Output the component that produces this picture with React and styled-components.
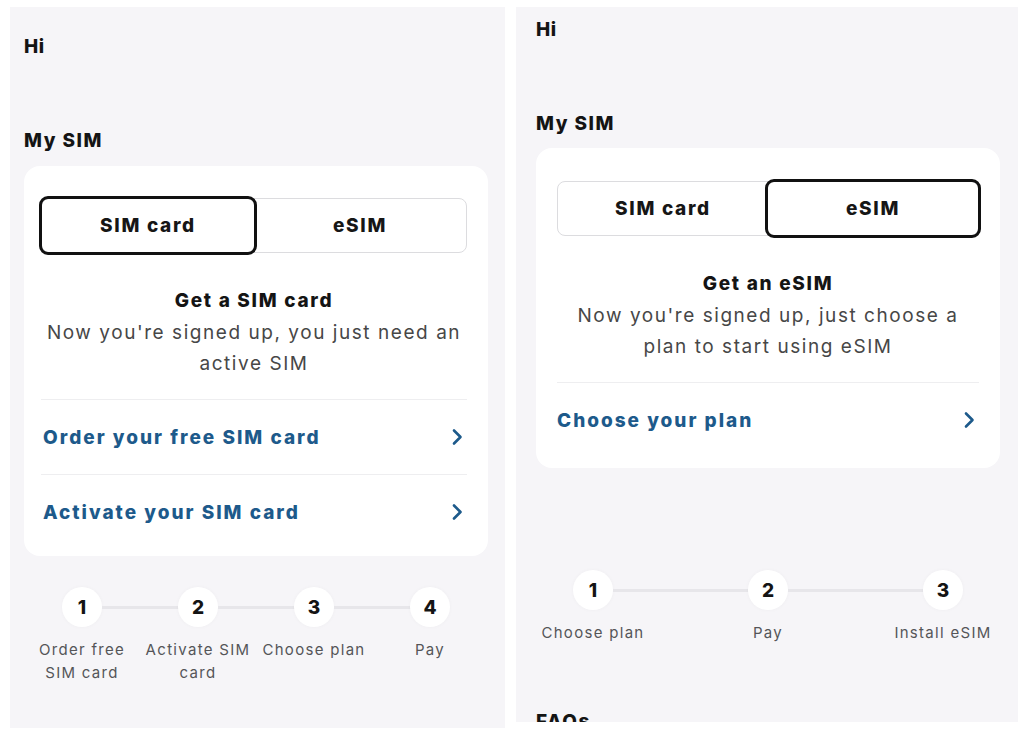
import React from 'react';
import styled, { createGlobalStyle } from 'styled-components';

const GlobalStyle = createGlobalStyle`
  html, body {
    margin: 0;
    padding: 0;
    background: #ffffff;
    font-family: 'Inter', 'Noto Sans', sans-serif;
    color: #141414;
  }
`;

const Page = styled.div`
  display: flex;
  align-items: flex-start;
  gap: 11px;
  padding: 7px 0 0 10px;
  width: 1036px;
  height: 746px;
  box-sizing: border-box;
  overflow: hidden;
`;

const Screen = styled.div`
  width: ${p => p.$width}px;
  height: ${p => p.$height}px;
  box-sizing: border-box;
  padding: ${p => p.$pad};
  background: #f6f5f8;
  display: flex;
  flex-direction: column;
  overflow: hidden;
`;

const Greeting = styled.div`
  font-size: 19px;
  font-weight: 800;
  line-height: 24px;
  letter-spacing: 0.5px;
`;

const SectionTitle = styled.div`
  margin-top: 70px;
  font-size: 19px;
  font-weight: 800;
  line-height: 24px;
  letter-spacing: 1.5px;
`;

const Card = styled.div`
  margin-top: ${p => p.$top}px;
  background: #ffffff;
  border-radius: 16px;
  padding: ${p => p.$pad};
  display: flex;
  flex-direction: column;
`;

const Toggle = styled.div`
  display: flex;
  height: 55px;
  margin: 2px 0;
  border: 1px solid #dcdcdf;
  border-radius: 8px;
  box-sizing: border-box;
`;

const ToggleTab = styled.div`
  flex: 1;
  display: flex;
  align-items: center;
  justify-content: center;
  font-size: 19px;
  font-weight: 800;
  letter-spacing: 1.7px;
  color: #161616;
  border-radius: 9px;
  ${p => p.$active && `
    margin: -3px;
    border: 3px solid #111;
  `}
`;

const Intro = styled.div`
  margin-top: 34px;
  text-align: center;
`;

const IntroTitle = styled.div`
  font-size: 19px;
  font-weight: 800;
  line-height: 24px;
  letter-spacing: 1.7px;
`;

const IntroText = styled.div`
  margin-top: 4px;
  font-size: 19px;
  font-weight: 400;
  line-height: 31px;
  letter-spacing: 1.55px;
  color: #474747;
`;

const LinkList = styled.div`
  margin-top: 20px;
`;

const LinkRow = styled.div`
  display: flex;
  align-items: center;
  justify-content: space-between;
  height: 74px;
  padding: 0 4px 0 ${p => p.$indent}px;
  border-top: 1px solid #eeeef0;
  font-size: 19px;
  font-weight: 800;
  letter-spacing: 2px;
  color: #1d5a8b;
`;

const Steps = styled.div`
  margin-top: ${p => p.$top}px;
  width: ${p => p.$width}px;
  align-self: ${p => p.$align};
  display: flex;
  justify-content: space-between;
`;

const Step = styled.div`
  position: relative;
  width: ${p => p.$width}px;
  display: flex;
  flex-direction: column;
  align-items: center;

  &:not(:last-child)::after {
    content: '';
    position: absolute;
    top: 19px;
    left: calc(50% + 20px);
    width: ${p => p.$pitch - 40}px;
    height: 3px;
    background: #e7e6ea;
  }
`;

const StepNumber = styled.div`
  width: 40px;
  height: 40px;
  border-radius: 50%;
  background: #ffffff;
  box-shadow: 0 0 4px rgba(0, 0, 0, 0.03);
  display: flex;
  align-items: center;
  justify-content: center;
  font-size: 19px;
  font-weight: 800;
`;

const StepLabel = styled.div`
  margin-top: 11px;
  text-align: center;
  font-size: 15px;
  line-height: 23px;
  letter-spacing: 1.3px;
  white-space: nowrap;
  color: #555558;
`;

const Faqs = styled.div`
  margin-top: 66px;
  font-size: 19px;
  font-weight: 800;
  line-height: 24px;
  letter-spacing: 1.5px;
`;

const Chevron = () => (
  <svg width="12" height="18" viewBox="0 0 12 18" fill="none">
    <path d="M3 2.5 L9.5 9 L3 15.5" stroke="#1d5a8b" strokeWidth="2.6" strokeLinecap="round" strokeLinejoin="round" />
  </svg>
);

const screens = [
  {
    width: 495,
    height: 721,
    pad: '28px 17px 0 14px',
    cardTop: 13,
    cardPad: '30px 21px 7px 17px',
    active: 0,
    title: 'Get a SIM card',
    text: ['Now you\'re signed up, you just need an', 'active SIM'],
    links: ['Order your free SIM card', 'Activate your SIM card'],
    linkIndent: 2,
    stepsTop: 31,
    stepsWidth: 464,
    stepWidth: 116,
    pitch: 116.5,
    stepsAlign: 'flex-start',
    steps: [['Order free', 'SIM card'], ['Activate SIM', 'card'], ['Choose plan'], ['Pay']],
  },
  {
    width: 502,
    height: 715,
    pad: '11px 18px 0 20px',
    cardTop: 12,
    cardPad: '31px 21px 11px 21px',
    active: 1,
    title: 'Get an eSIM',
    text: ['Now you\'re signed up, just choose a', 'plan to start using eSIM'],
    links: ['Choose your plan'],
    linkIndent: 0,
    stepsTop: 102,
    stepsWidth: 460,
    stepWidth: 110,
    pitch: 175,
    stepsAlign: 'center',
    steps: [['Choose plan'], ['Pay'], ['Install eSIM']],
    faqs: true,
  },
];

const SimScreen = ({ s }) => (
  <Screen $width={s.width} $height={s.height} $pad={s.pad}>
    <Greeting>Hi</Greeting>
    <SectionTitle>My SIM</SectionTitle>
    <Card $top={s.cardTop} $pad={s.cardPad}>
      <Toggle>
        <ToggleTab $active={s.active === 0}>SIM card</ToggleTab>
        <ToggleTab $active={s.active === 1}>eSIM</ToggleTab>
      </Toggle>
      <Intro>
        <IntroTitle>{s.title}</IntroTitle>
        <IntroText>
          {s.text.map(line => <div key={line}>{line}</div>)}
        </IntroText>
      </Intro>
      <LinkList>
        {s.links.map(link => (
          <LinkRow key={link} $indent={s.linkIndent}>
            {link}
            <Chevron />
          </LinkRow>
        ))}
      </LinkList>
    </Card>
    <Steps $top={s.stepsTop} $width={s.stepsWidth} $align={s.stepsAlign}>
      {s.steps.map((label, i) => (
        <Step key={i} $width={s.stepWidth} $pitch={s.pitch}>
          <StepNumber>{i + 1}</StepNumber>
          <StepLabel>
            {label.map(l => <div key={l}>{l}</div>)}
          </StepLabel>
        </Step>
      ))}
    </Steps>
    {s.faqs && <Faqs>FAQs</Faqs>}
  </Screen>
);

const App = () => (
  <>
    <GlobalStyle />
    <Page>
      {screens.map((s, i) => <SimScreen key={i} s={s} />)}
    </Page>
  </>
);

export default App;
